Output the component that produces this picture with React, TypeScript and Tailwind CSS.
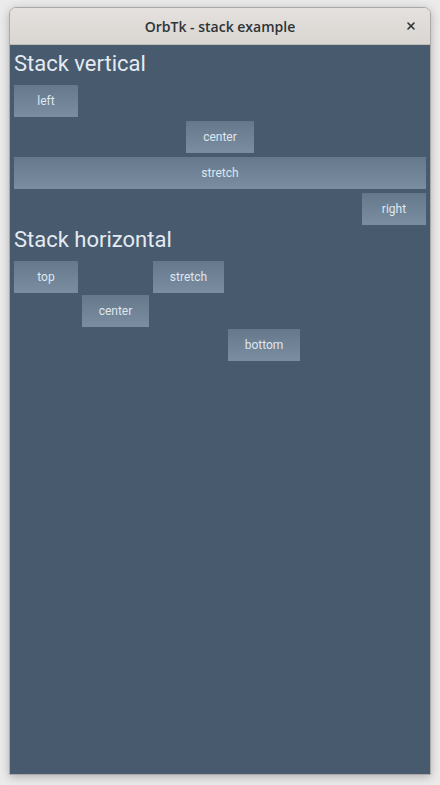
import { X } from 'lucide-react';

const btn =
  'h-[32px] flex items-center justify-center bg-gradient-to-b from-[#65788c] to-[#7b8ea1] text-[#dfe6ee] text-[12px] font-["Roboto",sans-serif]';

export default function App() {
  return (
    <div className="w-[440px] h-[785px] bg-[#ebebeb] pt-[7px] px-[9px] pb-[10px] flex">
      <div className="flex-1 flex flex-col border border-[#a9a8a6] rounded-t-[7px] overflow-hidden shadow-[0_2px_10px_rgba(0,0,0,0.25)]">
        {/* title bar */}
        <div className="h-[37px] shrink-0 relative flex items-center justify-center bg-gradient-to-b from-[#e4e1de] to-[#dad6d2] border-b border-[#bfbbb6]">
          <span className="text-[14px] font-semibold text-[#2e3436] font-['Open_Sans',sans-serif]">
            OrbTk - stack example
          </span>
          <X className="absolute right-[13px] top-[12px] w-[12px] h-[12px] text-[#2e3436]" strokeWidth={3.2} />
        </div>

        {/* content */}
        <div className="flex-1 bg-[#475a6e] px-[4px] pt-[4px] font-['Roboto',sans-serif]">
          <h1 className="text-[22px] leading-[30px] text-[#e4eaf0] mb-[6px]">Stack vertical</h1>
          <div className="flex flex-col gap-[4px]">
            <div className={`${btn} w-[64px] self-start`}>left</div>
            <div className={`${btn} w-[68px] self-center`}>center</div>
            <div className={`${btn} self-stretch`}>stretch</div>
            <div className={`${btn} w-[64px] self-end`}>right</div>
          </div>

          <h1 className="text-[22px] leading-[30px] text-[#e4eaf0] mb-[6px]">Stack horizontal</h1>
          <div className="flex flex-row gap-[4px] h-[100px]">
            <div className={`${btn} w-[64px] self-start`}>top</div>
            <div className={`${btn} w-[67px] self-center`}>center</div>
            <div className={`${btn} w-[71px] self-start`}>stretch</div>
            <div className={`${btn} w-[72px] self-end`}>bottom</div>
          </div>
        </div>
      </div>
    </div>
  );
}
